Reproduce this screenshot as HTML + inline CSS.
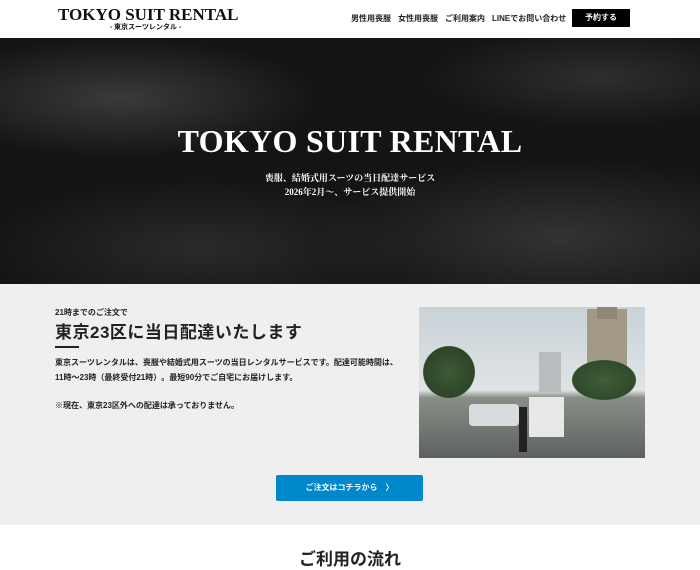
<!DOCTYPE html>
<html><head><meta charset="utf-8"><style>
*{margin:0;padding:0;box-sizing:border-box}
body{width:700px;height:559px;overflow:hidden;background:#fff;font-family:"Liberation Sans","Noto Sans CJK JP",sans-serif;color:#222;position:relative}
.hdr{position:absolute;top:0;left:0;width:700px;height:38px;background:#fff}
.logo{position:absolute;left:58px;top:6px;font-family:"Liberation Serif",serif;font-size:17px;font-weight:bold;line-height:18px;color:#111;width:175px;text-align:center;white-space:nowrap}
.logo small{display:block;font-family:"Liberation Sans","Noto Sans CJK JP",sans-serif;font-size:7px;font-weight:bold;text-align:center;line-height:8px;margin-top:0}
.nav{position:absolute;top:13px;font-size:8px;color:#222;font-weight:bold}
.btn{position:absolute;left:572px;top:9px;width:58px;height:18px;background:#000;color:#fff;font-size:8px;font-weight:bold;text-align:center;line-height:18px}
.hero{position:absolute;top:38px;left:0;width:700px;height:246px;background:radial-gradient(ellipse 200px 60px at 120px 60px,#3a3a3a,transparent),radial-gradient(ellipse 250px 80px at 560px 200px,#333,transparent),radial-gradient(ellipse 180px 50px at 600px 40px,#2e2e2e,transparent),radial-gradient(ellipse 220px 70px at 200px 210px,#2a2a2a,transparent),#141414;color:#fff;text-align:center}
.hero h1{font-family:"Liberation Serif",serif;font-size:32px;font-weight:bold;letter-spacing:0.3px;margin-top:83px;line-height:40px}
.hero p{font-family:"Liberation Serif","Noto Serif CJK SC",serif;font-size:9px;font-weight:bold;line-height:14px;margin-top:10px}
.sec{position:absolute;top:284px;left:0;width:700px;height:241px;background:#efefef}
.sub{position:absolute;left:55px;top:23px;font-size:8px;font-weight:bold}
.h2{position:absolute;left:55px;top:34px;font-size:17px;font-weight:bold;letter-spacing:.5px}
.bar{position:absolute;left:55px;top:62px;width:24px;height:1.5px;background:#222}
.txt{position:absolute;left:55px;top:71px;font-size:8px;font-weight:bold;line-height:15px;width:350px}
.photo{position:absolute;left:419px;top:23px;width:226px;height:151px;overflow:hidden;background:linear-gradient(#c9d2d8 0,#dfe3e5 55%,#8a8e88 60%,#5e625f 100%)}
.obtn{position:absolute;left:276px;top:191px;width:147px;height:26px;background:#0088cc;border-radius:2px;color:#fff;font-size:8px;font-weight:bold;text-align:center;line-height:26px}
.foot{position:absolute;top:545px;left:0;width:700px;text-align:center;font-size:17px;font-weight:bold}
</style></head><body>
<div class="hdr">
<div class="logo">TOKYO SUIT RENTAL<small>- 東京スーツレンタル -</small></div>
<div class="nav" style="left:351px">男性用喪服</div>
<div class="nav" style="left:398px">女性用喪服</div>
<div class="nav" style="left:445px">ご利用案内</div>
<div class="nav" style="left:492px">LINEでお問い合わせ</div>
<div class="btn">予約する</div>
</div>
<div class="hero"><h1>TOKYO SUIT RENTAL</h1><p>喪服、結婚式用スーツの当日配達サービス<br>2026年2月〜、サービス提供開始</p></div>
<div class="sec">
<div class="sub">21時までのご注文で</div>
<div class="h2">東京23区に当日配達いたします</div>
<div class="bar"></div>
<div class="txt">東京スーツレンタルは、喪服や結婚式用スーツの当日レンタルサービスです。配達可能時間は、11時〜23時（最終受付21時）。最短90分でご自宅にお届けします。<br><div style="height:13px"></div>※現在、東京23区外への配達は承っておりません。</div>
<div class="photo">
<div style="position:absolute;left:168px;top:2px;width:40px;height:80px;background:#a39a86"></div>
<div style="position:absolute;left:178px;top:-8px;width:20px;height:20px;background:#8f8777"></div>
<div style="position:absolute;left:120px;top:45px;width:22px;height:40px;background:#b8bcbe"></div>
<div style="position:absolute;left:0;top:35px;width:60px;height:60px;background:radial-gradient(circle at 30px 30px,#3d5a35,#2e4428 60%,transparent 62%)"></div>
<div style="position:absolute;left:140px;top:45px;width:90px;height:55px;background:radial-gradient(ellipse 45px 28px at 45px 28px,#405e38,#2e4a2a 70%,transparent 72%)"></div>
<div style="position:absolute;left:50px;top:97px;width:50px;height:22px;background:#d8dcdf;border-radius:4px"></div>
<div style="position:absolute;left:110px;top:90px;width:35px;height:40px;background:#e8e8e8"></div>
<div style="position:absolute;left:100px;top:100px;width:8px;height:45px;background:#222"></div>
</div>
<div class="obtn">ご注文はコチラから　〉</div>
</div>
<div class="foot">ご利用の流れ</div>
</body></html>
